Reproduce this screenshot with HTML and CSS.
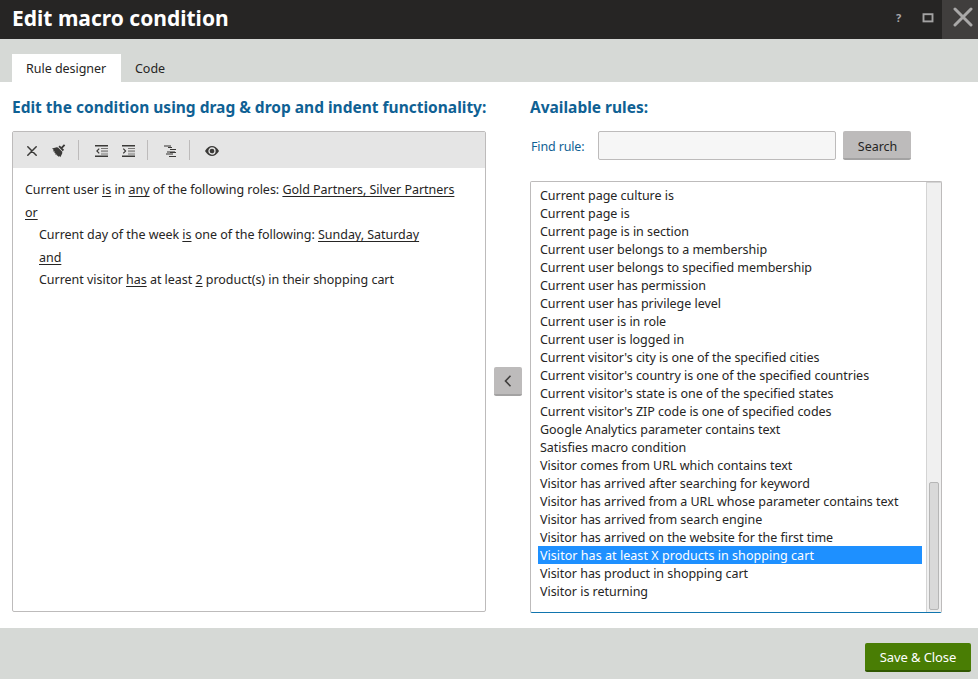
FILE: index.html
```html
<!DOCTYPE html>
<html lang="en">
<head>
<meta charset="utf-8">
<title>Edit macro condition</title>
<link rel="stylesheet" href="styles.css">
</head>
<body>
<div class="dialog">
  <header class="titlebar">
    <h1>Edit macro condition</h1>
    <div class="window-buttons">
      <span class="help">?</span>
      <svg class="maximize" width="12" height="10" viewBox="0 0 12 10"><rect x="1.5" y="1.2" width="9" height="7.2" fill="none" stroke="#a3a2a2" stroke-width="1.9"/></svg>
      <span class="close"><svg width="20" height="20" viewBox="0 0 20 20"><path d="M2 2 18 18M18 2 2 18" stroke="#a9a8a8" stroke-width="3" stroke-linecap="round"/></svg></span>
    </div>
  </header>
  <nav class="tabs">
    <span class="tab active">Rule designer</span>
    <span class="tab">Code</span>
  </nav>
  <main class="content">
    <section class="designer">
      <h2>Edit the condition using drag &amp; drop and indent functionality:</h2>
      <div class="editor">
        <div class="toolbar">
          <svg class="i-delete" width="10" height="10" viewBox="0 0 10 10"><path d="M.8.8 9.2 9.2M9.2.8.8 9.2" stroke="#3b3a38" stroke-width="1.5" stroke-linecap="round"/></svg>
          <svg class="i-clear" width="14" height="14" viewBox="0 0 14 14"><path d="M0 4.5 4.8 3.2 6 3.4 10.3 7.8 10.2 9.5 8.3 13.2 7.6 12 6.8 13 5.8 11.6 5 12 4.7 10.4 3.4 10.8 3.5 9.2 2.4 9 2.7 7.5.8 7.2 1.8 6Z" fill="#3b3a38"/><path d="m7.1 2.2 4.3 4.3M9.2 4.4 12.6.8" fill="none" stroke="#3b3a38" stroke-width="1.8"/></svg>
          <i class="sep"></i>
          <svg class="i-outdent" width="13" height="12" viewBox="0 0 13 12"><path d="M0 0h13v1.4H0zM0 10.6h13V12H0z" fill="#3b3a38"/><path d="M6 3h7v1H6zM6 8.5h7v1H6z" fill="#777675"/><path d="M6 5.2h7v2H6z" fill="#999897"/><path d="M4.2 3.6 1.9 6 4.2 8.4" fill="none" stroke="#3b3a38" stroke-width="1.2"/></svg>
          <svg class="i-indent" width="13" height="12" viewBox="0 0 13 12"><path d="M0 0h13v1.4H0zM0 10.6h13V12H0z" fill="#3b3a38"/><path d="M6 3h7v1H6zM6 8.5h7v1H6z" fill="#777675"/><path d="M6 5.2h7v2H6z" fill="#999897"/><path d="M1.3 3.6 3.6 6 1.3 8.4" fill="none" stroke="#3b3a38" stroke-width="1.2"/></svg>
          <i class="sep"></i>
          <svg class="i-auto" width="13" height="12" viewBox="0 0 13 12"><path d="M0 0h7v2H0zM3 6h8v2H3zM2 8h7v2H2z" fill="#8c8b8a"/><path d="M4 2h4v1H4zM6 4h6v1H6zM6 7h6v1H6zM5 11h7v1H5z" fill="#3b3a38"/></svg>
          <i class="sep"></i>
          <svg class="i-view" width="14" height="10" viewBox="0 0 14 10"><path d="M0 5Q3 0 7 0t7 5q-3 5-7 5T0 5Z" fill="#3b3a38"/><circle cx="7" cy="5" r="3" fill="none" stroke="#e5e5e5" stroke-width="1.3"/></svg>
        </div>
        <div class="conditions">
          <p>Current user <u>is</u> in <u>any</u> of the following roles: <u>Gold Partners, Silver Partners</u></p>
          <p><u>or</u></p>
          <p class="nested">Current day of the week <u>is</u> one of the following: <u>Sunday, Saturday</u></p>
          <p class="nested"><u>and</u></p>
          <p class="nested">Current visitor <u>has</u> at least <u>2</u> product(s) in their shopping cart</p>
        </div>
      </div>
    </section>
    <div class="move"><button aria-label="Add rule"><svg width="8" height="12" viewBox="0 0 8 12"><path d="M6.5.8 1.5 6l5 5.2" fill="none" stroke="#403e3d" stroke-width="1.6"/></svg></button></div>
    <section class="available">
      <h2>Available rules:</h2>
      <div class="search">
        <label for="find">Find rule:</label>
        <input id="find" type="text">
        <button>Search</button>
      </div>
      <div class="rules">
        <ul>
          <li>Current page culture is</li>
          <li>Current page is</li>
          <li>Current page is in section</li>
          <li>Current user belongs to a membership</li>
          <li>Current user belongs to specified membership</li>
          <li>Current user has permission</li>
          <li>Current user has privilege level</li>
          <li>Current user is in role</li>
          <li>Current user is logged in</li>
          <li>Current visitor's city is one of the specified cities</li>
          <li>Current visitor's country is one of the specified countries</li>
          <li>Current visitor's state is one of the specified states</li>
          <li>Current visitor's ZIP code is one of specified codes</li>
          <li>Google Analytics parameter contains text</li>
          <li>Satisfies macro condition</li>
          <li>Visitor comes from URL which contains text</li>
          <li>Visitor has arrived after searching for keyword</li>
          <li>Visitor has arrived from a URL whose parameter contains text</li>
          <li>Visitor has arrived from search engine</li>
          <li>Visitor has arrived on the website for the first time</li>
          <li class="selected">Visitor has at least X products in shopping cart</li>
          <li>Visitor has product in shopping cart</li>
          <li>Visitor is returning</li>
        </ul>
        <div class="scrollbar"><div class="thumb"></div></div>
      </div>
    </section>
  </main>
  <footer><button class="save">Save &amp; Close</button></footer>
</div>
</body>
</html>
```
FILE: styles.css
```css
* { box-sizing: border-box; }
body { margin: 0; background: #fff; color: #262524; font: 12.5px/18px "Noto Sans", "Open Sans", sans-serif; letter-spacing: -.03px; overflow: hidden; }
h1, h2, p, ul { margin: 0; padding: 0; }
svg { display: block; flex: none; }
button { border: 0; padding: 0; font: inherit; letter-spacing: inherit; color: inherit; }
.dialog { display: flex; flex-direction: column; width: 978px; height: 679px; }
.titlebar { height: 39px; flex: none; background: #262524; display: flex; justify-content: space-between; padding-left: 12px; }
h1 { color: #fff; font-size: 21px; line-height: 37px; letter-spacing: 0; }
.window-buttons { display: flex; }
.help { color: #a9a8a8; font-size: 11px; font-weight: 700; line-height: 36px; width: 26px; }
.maximize { margin: 13px 8px 0 0; }
.close { width: 36px; background: #403e3d; padding: 7px 0 0 11px; }
.tabs { height: 43px; flex: none; background: #d6d9d6; padding: 15px 0 0 12px; display: flex; }
.tab { padding: 6px 14px 0; height: 28px; white-space: nowrap; }
.tab.active { background: #fff; width: 109px; }
.content { flex: 1; display: flex; padding: 15px 0 0 12px; }
.designer { width: 474px; }
h2 { color: #0f6194; font-size: 15.5px; line-height: 20px; letter-spacing: 0; white-space: nowrap; }
.editor { margin-top: 14px; height: 481px; border: 1px solid #bdbbbb; border-radius: 2px; }
.toolbar { height: 36px; background: #e5e5e5; display: flex; align-items: center; padding: 2px 0 0 14px; }
.sep { width: 1px; height: 20px; margin-bottom: 2px; background: #bdbbbb; }
.i-clear { margin: 0 12px 0 15px; }
.i-outdent { margin-left: 16px; }
.i-indent { margin: 0 12px 0 14px; }
.i-auto { margin: 0 12px 0 16px; }
.i-view { margin-left: 15px; }
.conditions { padding: 11px 12px; line-height: 22.5px; letter-spacing: -.03px; white-space: nowrap; }
.nested { padding-left: 14px; }
u { text-decoration: underline; text-decoration-thickness: 1px; text-underline-offset: 2px; text-decoration-skip-ink: none; }
.move { width: 44px; padding: 270px 0 0 8px; }
.move button { width: 28px; height: 29px; background: #bdbbbb; border-bottom: 2px solid #a3a2a2; border-radius: 2px; padding-left: 10px; }
.available { width: 412px; }
.search { display: flex; margin-top: 14px; height: 29px; }
.search label { width: 67px; margin-left: 1px; line-height: 32px; letter-spacing: -.15px; color: #0f6194; }
.search input { width: 238px; border: 1px solid #bdbbbb; border-radius: 2px; background: #f6f6f6; margin: 0 7px 0 0; padding: 0; }
.search button { width: 68px; background: #bdbbbb; border-bottom: 2px solid #a3a2a2; border-radius: 2px; padding: 4px 0 0 1px; }
.rules { margin-top: 21px; height: 432px; border: 1px solid #bdbbbb; border-bottom-color: #1175ae; border-radius: 2px; display: flex; justify-content: space-between; }
ul { list-style: none; width: 391px; padding: 4px 0 0 7px; }
li { height: 18px; line-height: 20px; padding-left: 2px; white-space: nowrap; width: 384px; }
li.selected { background: #1e90ff; color: #fff; letter-spacing: .05px; }
.scrollbar { width: 15px; background: #f0f0f0; border: 1px solid #d4d4d4; border-width: 1px 0 0 1px; padding: 299px 2px 0; }
.thumb { width: 10px; height: 128px; background: #d9d9d9; border: 1px solid #b6b6b6; border-radius: 2px; }
footer { height: 51px; flex: none; background: #d6d9d6; padding: 15px 7px 0; display: flex; justify-content: flex-end; }
.save { width: 106px; height: 29px; background: #497d04; color: #fff; font-size: 13px; letter-spacing: -.1px; border-bottom: 2px solid #315801; border-radius: 2px; }
```
